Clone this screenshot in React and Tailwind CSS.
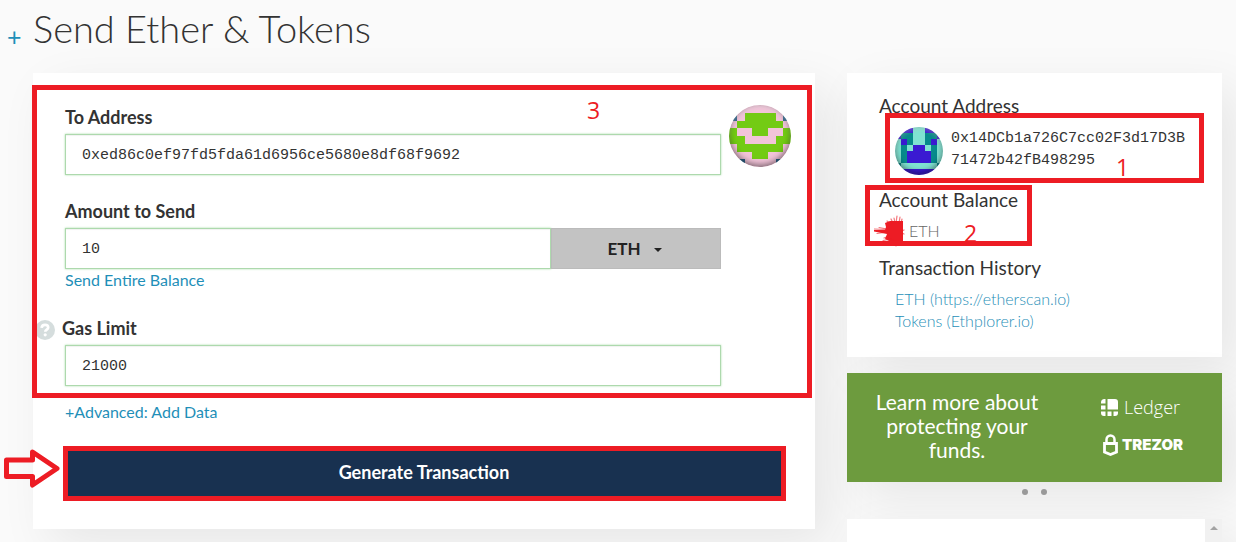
import React from "react";

const recipientIcon = {
  colors: { a: "#f2c4d9", b: "#73cb14", c: "#2c648c" },
  rows: ["caaaaaac", "cabbbbac", "abbbbbba", "baabbaab", "bbaaaabb", "abbbbbba", "aaabbaaa", "acaaaaca"],
};
const accountIcon = {
  colors: { a: "#7fe3d2", b: "#078a8c", c: "#3a1ad2" },
  rows: ["cccaaccc", "cbbaabbc", "acbaabca", "abaccaba", "abccccba", "abccccba", "baaaaaab", "cccccccc"],
};

function Identicon({ icon, className }) {
  return (
    <div className={`relative shrink-0 overflow-hidden rounded-full ${className}`}>
      <svg viewBox="0 0 8 8" className="block h-full w-full" shapeRendering="crispEdges" aria-hidden="true">
        {icon.rows.map((row, y) =>
          [...row].map((cell, x) => (
            <rect key={`${x}-${y}`} x={x} y={y} width="1" height="1" fill={icon.colors[cell]} />
          ))
        )}
      </svg>
      <div className="absolute inset-0 rounded-full shadow-[inset_0_-2px_6px_rgba(0,0,0,0.5),inset_0_2px_4px_rgba(255,255,255,0.3)]" />
    </div>
  );
}

const field =
  "block h-[41px] w-full min-w-0 border border-[#add9ad] bg-white px-4 pt-0.5 font-['Liberation_Mono',monospace] text-[15px] text-[#333] shadow-[inset_0_1px_1px_rgba(0,0,0,0.06),0_0_2px_#a9dca9] outline-none";
const label = "block text-[18px] leading-6 font-bold text-[#333]";
const card = "bg-white shadow-[16px_16px_47px_0_rgba(0,0,0,0.08)]";
const heading = "text-[19px] leading-6 text-[#333]";
const mark = "pointer-events-none absolute border-[5px] border-[#ed1c24]";
const markText = "pointer-events-none absolute font-['Open_Sans',sans-serif] text-[23px] leading-6 font-medium text-[#ed1c24]";

function SendForm() {
  return (
    <form className={`relative col-span-2 px-8 pt-8 pb-[30px] ${card}`}>
      <div className="flex gap-2">
        <div className="min-w-0 flex-1">
          <label htmlFor="to" className={label}>To Address</label>
          <input id="to" className={`mt-[5px] ${field}`} defaultValue="0xed86c0ef97fd5fda61d6956ce5680e8df68f9692" />
        </div>
        <Identicon icon={recipientIcon} className="-mr-2 h-[62px] w-[62px]" />
      </div>

      <div className="mt-6 pr-[62px]">
        <label htmlFor="amount" className={label}>Amount to Send</label>
        <div className="mt-[5px] flex">
          <div className="min-w-0 flex-1">
            <input id="amount" className={field} defaultValue="10" />
          </div>
          <div className="relative w-[170px]">
            <select
              aria-label="Currency"
              className="block h-[41px] w-full appearance-none border border-[#bbb] bg-[#c3c3c3] pr-[24px] text-center text-[17px] font-bold text-[#222] [text-align-last:center]"
            >
              <option>ETH</option>
            </select>
            <svg viewBox="0 0 8 4" className="pointer-events-none absolute top-5 right-[59px] h-1 w-2" aria-hidden="true">
              <path d="M0 0H8L4 4Z" fill="#222" />
            </svg>
          </div>
        </div>
        <a href="#all" className="block text-[16px] leading-[22px] text-[#1f8fb8]">Send Entire Balance</a>
      </div>

      <div className="mt-[25px] pr-[62px]">
        <div className="-ml-[29px] flex h-6 items-center gap-[7px]">
          <svg viewBox="0 0 20 20" className="mt-1 h-5 w-[19px]" preserveAspectRatio="xMaxYMid slice" aria-hidden="true">
            <circle cx="10" cy="10" r="10" fill="#d5dddd" />
            <path d="M6.600 7.800C6.800 5.600 8.200 4.800 10 4.800s3.200 1 3.200 2.700c0 2.200-2.900 2.200-2.900 4.300" fill="none" stroke="#fff" strokeWidth="2.700" />
            <circle cx="10.200" cy="14.800" r="1.600" fill="#fff" />
          </svg>
          <label htmlFor="gas" className={label}>Gas Limit</label>
        </div>
        <input id="gas" className={`mt-[5px] ${field}`} defaultValue="21000" />
      </div>

      <a href="#advanced" className="mt-[15px] block text-[16px] leading-[22px] text-[#1f8fb8]">+Advanced: Add Data</a>

      <div className="relative mt-[25px]">
        <button type="button" className="block h-[51px] w-full bg-[#183150] pb-[3px] text-[18px] font-bold text-white">
          Generate Transaction
        </button>
        <div className={`-top-0.5 -right-[3px] -bottom-0.5 -left-0.5 ${mark}`} />
        <svg viewBox="0 0 58 42" className="absolute top-0 -left-[62px] h-[42px] w-[58px]" aria-hidden="true">
          <path d="M3.500 12H29.500V4L54 20.500L29.500 37V28.500H3.500Z" fill="none" stroke="#ed1c24" strokeWidth="5" strokeLinejoin="round" />
        </svg>
      </div>

      <div className={`top-3 right-[3px] -left-px h-[313px] ${mark}`} />
      <span className={`top-[25px] left-[554px] ${markText}`}>3</span>
    </form>
  );
}

function Scribble() {
  return (
    <svg viewBox="0 0 32 32" className="-ml-[5px] h-8 w-8 shrink-0" aria-hidden="true">
      <path d="M11 8L16 6L29 6V28H19L11 24L13 19L0 16.500V15L11 15L12 12Z" fill="#ed1c24" />
      <path
        d="M0 14L12 14.500M3 18.500L13 17M5 12.500L13 14M10 23L15 21M9 25.500L17 24M14 28L19 25M17 29.500L20 26M22 31L22 26M26 30L25 26M13 6L17 9M17 4L19 8M20 3L21 8M23 1L22 8M26 2L25 8M28 4L27 8M30 15L28 16M30 19L28 18"
        fill="none"
        stroke="#ed1c24"
        strokeOpacity=".6"
        strokeWidth="1.200"
        strokeLinecap="round"
      />
    </svg>
  );
}

function Account() {
  return (
    <section className={`relative px-8 pt-[21px] pb-6 ${card}`}>
      <h2 className={heading}>Account Address</h2>
      <div className="mt-[9px] flex gap-2 pl-4">
        <Identicon icon={accountIcon} className="h-12 w-12" />
        <p className="mt-px flex flex-col items-start font-['Liberation_Mono',monospace] text-[15px] leading-[22px] text-[#333]">
          <span>0x14DCb1a726C7cc02F3d17D3B</span>
          <span>71472b42fB498295</span>
        </p>
      </div>
      <h2 className={`mt-[13px] ${heading}`}>Account Balance</h2>
      <div className="mt-[3px] flex h-8 items-center gap-[3px] text-[16px] font-light text-[#666]">
        <Scribble />
        <span>ETH</span>
      </div>
      <h2 className={`mt-[9px] ${heading}`}>Transaction History</h2>
      <ul className="mt-2 mb-px pl-4 text-[16px] leading-[22px] font-light text-[#1f8fb8]">
        <li><a href="#eth">ETH (https://etherscan.io)</a></li>
        <li><a href="#tokens">Tokens (Ethplorer.io)</a></li>
      </ul>

      <div className={`top-10 right-[18px] left-[38px] h-[70px] ${mark}`} />
      <span className={`top-[82px] left-[269px] ${markText}`}>1</span>
      <div className={`top-28 left-[18px] h-[61px] w-[167px] ${mark}`} />
      <span className={`top-[148px] left-[117px] ${markText}`}>2</span>
    </section>
  );
}

function Banner() {
  return (
    <section className="relative flex h-[109px] items-center bg-[#6d9b3e] pb-[3px] text-white shadow-[16px_16px_47px_0_rgba(0,0,0,0.08)]">
      <p className="ml-5 w-[180px] text-center text-[21px] leading-6">Learn more about protecting your funds.</p>
      <div className="ml-[54px] flex flex-col gap-[14px]">
        <div className="flex items-center gap-[6px]">
          <svg viewBox="0 0 17 17" className="h-[17px] w-[17px]" fill="#fff" aria-hidden="true">
            <path d="M6.500 0H14Q17 0 17 3V10.500H6.500ZM0 3.500Q0 0 3.500 0H4.500V4.500H0ZM0 6.500H4.500V10.500H0ZM0 12.500H4.500V17H3Q0 17 0 14ZM6.500 12.500H10.500V17H6.500ZM12.500 12.500H17V14Q17 17 14 17H12.500Z" />
          </svg>
          <span className="font-['Open_Sans',sans-serif] text-[18px] leading-6 font-light">Ledger</span>
        </div>
        <div className="flex items-center gap-1 pl-[2px]">
          <svg viewBox="0 0 15 22" className="h-[22px] w-[15px]" fill="none" stroke="#fff" aria-hidden="true">
            <path d="M1.500 9.500H13.500V18L7.500 20.500L1.500 18Z" strokeWidth="2.800" />
            <path d="M3.500 9V5.500a4 4 0 0 1 8 0V9" strokeWidth="2.500" />
          </svg>
          <span className="font-['Inter',sans-serif] text-[15px] leading-6 font-black">TREZOR</span>
        </div>
      </div>
    </section>
  );
}

export default function App() {
  return (
    <div className="h-screen overflow-hidden bg-[#fafafa] font-['Lato',sans-serif] text-[#333]">
      <header className="flex h-[73px] items-start pt-[6px] pl-[7px]">
        <button type="button" aria-label="Expand" className="mt-4 w-[26px] text-left text-[25px] leading-7 text-[#1f8fb8]">+</button>
        <h1 className="text-[38px] leading-[45px] font-light text-[#333]">Send Ether &amp; Tokens</h1>
      </header>
      <main className="grid grid-cols-3 items-start gap-8 pr-[14px] pl-[33px]">
        <SendForm />
        <aside className="min-w-0">
          <Account />
          <div className="mt-4"><Banner /></div>
          <div className="relative flex h-[37px] justify-center gap-[13px] pt-[7px]">
            <button type="button" aria-label="Slide 1" className="h-[6px] w-[6px] rounded-full bg-[#999]" />
            <button type="button" aria-label="Slide 2" className="h-[6px] w-[6px] rounded-full bg-[#999]" />
          </div>
          <div className={`relative flex h-24 justify-end ${card}`}>
            <div className="w-[17px] bg-[#f1f1f1] pt-[7px]">
              <svg viewBox="0 0 8 4" className="mx-auto h-1 w-2" aria-hidden="true">
                <path d="M0 4L4 0L8 4Z" fill="#a3a3a3" />
              </svg>
            </div>
          </div>
        </aside>
      </main>
    </div>
  );
}
